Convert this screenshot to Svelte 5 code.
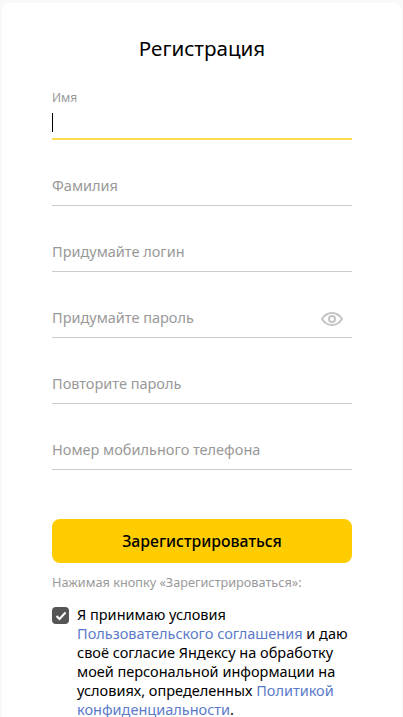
<script>
    const fields = [
        { label: "Фамилия" },
        { label: "Придумайте логин" },
        { label: "Придумайте пароль", eye: true },
        { label: "Повторите пароль" },
        { label: "Номер мобильного телефона" }
    ];
</script>

<div class="card">
    <h1>Регистрация</h1>

    <form>
        <div class="field active">
            <span class="small-label">Имя</span>
            <span class="caret"></span>
        </div>

        {#each fields as field}
            <div class="field">
                <span class="label">{field.label}</span>
                {#if field.eye}
                    <svg class="eye" width="22" height="14" viewBox="0 0 22 14" fill="none">
                        <path d="M1 7C3.5 3 7 1 11 1s7.500 2 10 6c-2.500 4-6 6-10 6S3.500 11 1 7z" stroke="#c4c4c4" stroke-width="2" />
                        <circle cx="11" cy="7" r="3" stroke="#c4c4c4" stroke-width="2" />
                    </svg>
                {/if}
            </div>
        {/each}

        <button type="button">Зарегистрироваться</button>
    </form>

    <p class="hint">Нажимая кнопку «Зарегистрироваться»:</p>

    <div class="agree">
        <span class="box">
            <svg width="12" height="10" viewBox="0 0 12 10" fill="none">
                <path d="M1.500 5l3 3 6-6.500" stroke="#fff" stroke-width="2" />
            </svg>
        </span>
        <p>
            Я принимаю условия
            <a href="#terms">Пользовательского соглашения</a> и даю своё согласие Яндексу на обработку
            моей персональной информации на условиях, определенных
            <a href="#privacy">Политикой конфиденциальности</a>.
        </p>
    </div>
</div>

<style>
    * {
        box-sizing: border-box;
    }

    :global(body) {
        margin: 0;
        background: #f9f9f9;
        overflow: hidden;
    }

    .card {
        height: 717px;
        margin: 3px 1px 0 2px;
        padding: 23px 50px 0;
        background: #fff;
        border-radius: 8px 8px 0 0;
        overflow: hidden;
        font-family: "Noto Sans", sans-serif;
        color: #000;
    }

    h1 {
        margin: 0 0 20px;
        font-size: 20.600px;
        line-height: 44px;
        font-weight: 400;
        text-align: center;
    }

    form {
        display: flex;
        flex-direction: column;
    }

    .field {
        position: relative;
        display: flex;
        align-items: center;
        justify-content: space-between;
        height: 47px;
        margin-top: 19px;
        padding-top: 6px;
        border-bottom: 1px solid #ccc;
    }

    .field:first-child {
        display: block;
        height: 50px;
        margin-top: 0;
        padding-top: 0;
        border-bottom: 2px solid #ffdb4d;
    }

    .label {
        font-size: 14.500px;
        color: #999;
    }

    .small-label {
        display: block;
        font-size: 12px;
        line-height: 16px;
        color: #999;
    }

    .caret {
        display: block;
        width: 1px;
        height: 19px;
        margin-top: 7px;
        background: #000;
    }

    .eye {
        margin-top: 4px;
        margin-right: 9px;
    }

    button {
        height: 44px;
        margin-top: 49px;
        border: 0;
        border-radius: 8px;
        background: #fc0;
        font: 500 15.800px "Noto Sans", sans-serif;
        color: #000;
    }

    .hint {
        margin: 11px 0 0;
        font-size: 12.700px;
        line-height: 16px;
        color: #999;
    }

    .agree {
        display: flex;
        gap: 8px;
        margin-top: 15px;
    }

    .box {
        flex: none;
        display: flex;
        align-items: center;
        justify-content: center;
        width: 17px;
        height: 17px;
        margin-top: 2px;
        border-radius: 4px;
        background: #555;
    }

    .agree p {
        margin: 0;
        font-size: 14.500px;
        line-height: 19px;
    }

    a {
        color: #5b7bc9;
        text-decoration: none;
    }
</style>
